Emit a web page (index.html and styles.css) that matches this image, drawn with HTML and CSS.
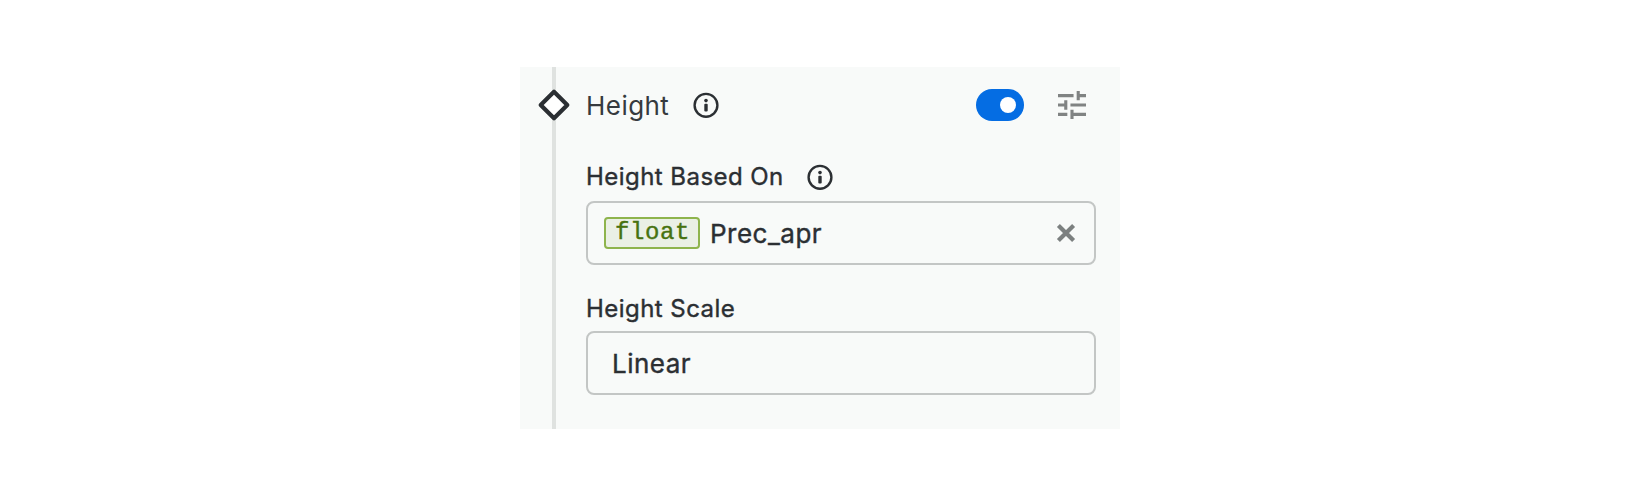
FILE: index.html
```html
<!DOCTYPE html>
<html lang="en">
<head>
<meta charset="utf-8">
<title>Height</title>
<link rel="stylesheet" href="styles.css">
</head>
<body>
<section class="panel">
  <div class="rail">
    <svg class="diamond" width="36" height="36" viewBox="0 0 36 36"><path d="M18 4.7 31.3 18 18 31.3 4.7 18Z" fill="#fff" stroke="#2b2f33" stroke-width="4.2" stroke-linejoin="round"/></svg>
  </div>
  <div class="content">
    <header class="header">
      <span class="title">Height</span>
      <svg class="info" width="26" height="26" viewBox="0 0 26 26"><circle cx="13" cy="13.3" r="11.4" fill="none" stroke="#2b2f33" stroke-width="2.4"/><circle cx="13" cy="8.6" r="1.8" fill="#2b2f33"/><rect x="11.3" y="11.8" width="3.4" height="7.6" rx="1" fill="#2b2f33"/></svg>
      <span class="toggle"><span class="knob"></span></span>
      <svg class="tune" width="28" height="28" viewBox="3 3 18 18"><path fill="#808383" d="M3 17v2h6v-2H3zM3 5v2h10V5H3zm10 16v-2h8v-2h-8v-2h-2v6h2zM7 9v2H3v2h4v2h2V9H7zm14 4v-2H11v2h10zm-6-4h2V7h4V5h-4V3h-2v6z"/></svg>
    </header>
    <div class="label label-based"><span>Height Based On</span>
      <svg class="info" width="26" height="26" viewBox="0 0 26 26"><circle cx="13" cy="13.3" r="11.4" fill="none" stroke="#2b2f33" stroke-width="2.4"/><circle cx="13" cy="8.6" r="1.8" fill="#2b2f33"/><rect x="11.3" y="11.8" width="3.4" height="7.6" rx="1" fill="#2b2f33"/></svg>
    </div>
    <div class="field">
      <span class="type">float</span>
      <span class="value">Prec_apr</span>
      <svg class="clear" width="20" height="20" viewBox="0 0 20 20"><path d="M2.4 2.4 17.6 17.6M17.6 2.4 2.4 17.6" stroke="#7c8080" stroke-width="4.2"/></svg>
    </div>
    <div class="label label-scale"><span>Height Scale</span></div>
    <div class="field field-select"><span class="value">Linear</span></div>
  </div>
</section>
</body>
</html>
```
FILE: styles.css
```css
* { box-sizing: border-box; }
body {
  margin: 0;
  padding-top: 67px;
  background: #fff;
  color: #2b2f33;
  font-family: Inter, "Liberation Sans", sans-serif;
}
.panel {
  display: flex;
  width: 600px;
  height: 362px;
  margin: 0 auto;
  background: #f8faf9;
}
.rail {
  display: flex;
  flex: none;
  justify-content: center;
  width: 4px;
  margin-left: 32px;
  background: #dfe2e0;
}
.diamond { flex: none; margin-top: 20px; }
.content { width: 510px; margin-left: 30px; }
.header {
  display: flex;
  align-items: center;
  height: 76px;
}
.title {
  width: 107px;
  font-size: 26px;
  line-height: 32px;
  letter-spacing: 0.45px;
  padding-top: 1px;
  color: #363a3e;
}
.info { flex: none; }
.toggle {
  display: flex;
  align-items: center;
  justify-content: flex-end;
  width: 48px;
  height: 32px;
  margin-left: auto;
  padding-right: 8px;
  border-radius: 16px;
  background: #056de3;
}
.knob { width: 16px; height: 16px; border-radius: 50%; background: #fff; }
.tune { margin: 0 10px 0 34px; }
.label {
  display: flex;
  align-items: center;
  height: 32px;
  font-size: 24px;
  line-height: 32px;
  letter-spacing: 0.45px;
  -webkit-text-stroke: 0.4px #2b2f33;
}
.label-based { margin: 18px 0 8px; }
.label-based span { width: 221px; }
.label-scale { margin: 28px 0 6px; }
.field {
  display: flex;
  align-items: center;
  height: 64px;
  padding: 0 18px 0 16px;
  border: 2px solid #c3c6c5;
  border-radius: 8px;
}
.field-select { padding-left: 24px; }
.type {
  width: 96px;
  height: 32px;
  padding-left: 1px;
  border: 2px solid #8eb44d;
  border-radius: 4px;
  background: #eaf0e5;
  color: #47720f;
  font: 24px/27px "Liberation Mono", monospace;
  letter-spacing: 0.6px;
  text-align: center;
  -webkit-text-stroke: 0.4px #47720f;
}
.value {
  padding-top: 2px;
  font-size: 26px;
  line-height: 32px;
  letter-spacing: 0.5px;
  -webkit-text-stroke: 0.4px #2b2f33;
}
.type + .value { margin-left: 10px; }
.clear { margin-left: auto; }
```
